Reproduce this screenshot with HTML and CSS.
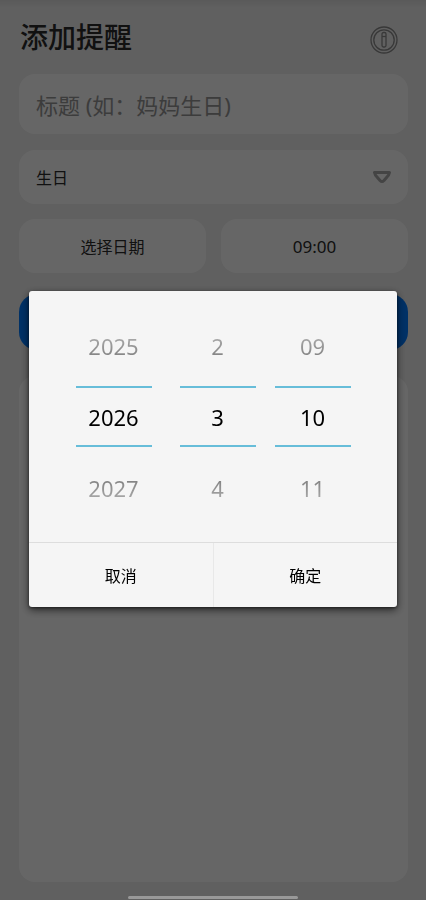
FILE: index.html
```html
<!DOCTYPE html>
<html lang="zh-CN">
<head>
<meta charset="utf-8">
<meta name="viewport" content="width=device-width, initial-scale=1">
<title>添加提醒</title>
<link rel="stylesheet" href="styles.css">
</head>
<body>
<main class="page">
  <header class="header">
    <h1 class="title">添加提醒</h1>
    <button class="info" type="button" aria-label="关于">
      <svg viewBox="0 0 28 28" width="28" height="28" fill="none" stroke="currentColor" stroke-width="1.3">
        <circle cx="14" cy="14" r="13"/>
        <circle cx="14" cy="14" r="10.2"/>
        <rect x="12" y="6.500" width="4" height="14.500" rx="1.500"/>
        <path d="M12 10.500H16"/>
      </svg>
    </button>
  </header>
  <form class="form">
    <input class="field name" type="text" aria-label="标题" placeholder="标题 (如：妈妈生日)">
    <div class="select-wrap">
      <select class="field kind" aria-label="类型"><option>生日</option></select>
      <svg class="arrow" viewBox="0 0 20 14" width="20" height="14" fill="none" stroke="currentColor" stroke-width="3" stroke-linejoin="round">
        <path d="M2.500 2.500H17.500Q17 5 15 7L12 10.500Q10 12.500 8 10.500L5 7Q3 5 2.500 2.500Z"/>
      </svg>
    </div>
    <div class="pair">
      <button class="field date" type="button">选择日期</button>
      <button class="field time" type="button">09:00</button>
    </div>
    <button class="submit" type="button" aria-label="保存"></button>
  </form>
  <section class="list" aria-label="提醒列表"></section>
</main>
<div class="scrim">
  <div class="dialog" role="dialog" aria-modal="true" aria-label="选择日期">
    <div class="picker">
      <div class="wheel year">
        <button class="step prev" type="button">2025</button>
        <input class="current" type="text" aria-label="年" value="2026">
        <button class="step next" type="button">2027</button>
      </div>
      <div class="wheel">
        <button class="step prev" type="button">2</button>
        <input class="current" type="text" aria-label="月" value="3">
        <button class="step next" type="button">4</button>
      </div>
      <div class="wheel">
        <button class="step prev" type="button">09</button>
        <input class="current" type="text" aria-label="日" value="10">
        <button class="step next" type="button">11</button>
      </div>
    </div>
    <div class="actions">
      <button class="action" type="button">取消</button>
      <button class="action" type="button">确定</button>
    </div>
  </div>
</div>
<div class="home-bar"></div>
</body>
</html>
```
FILE: styles.css
```css
* {
  box-sizing: border-box;
}

body {
  margin: 0;
  background: #f0f0f0;
  color: #2b2b2b;
  font-family: "Noto Sans", "Noto Sans CJK SC", sans-serif;
}

button,
input,
select {
  margin: 0;
  padding: 0;
  border: 0;
  background: none;
  color: inherit;
  font: inherit;
}

.page {
  display: flex;
  flex-direction: column;
  min-height: 100vh;
  padding: 16px 18px 18px 19px;
  background: linear-gradient(#e0e0e0, #f0f0f0 8px);
}

.header {
  display: flex;
  align-items: center;
  justify-content: space-between;
  height: 42px;
  padding: 0 10px 0 1px;
}

.title {
  margin: 0;
  font-size: 28px;
  line-height: 42px;
  font-weight: 500;
}

.info {
  height: 28px;
  margin-top: 6px;
  color: #8c8c8c;
}

.info svg {
  display: block;
}

.form {
  display: flex;
  flex-direction: column;
  margin-top: 16px;
}

.field {
  width: 100%;
  height: 54px;
  border-radius: 16px;
  background: #fff;
  font-size: 16px;
}

.name {
  height: 60px;
  padding: 2px 17px 0;
  font-size: 22px;
}

.name::placeholder {
  color: #969696;
  opacity: 1;
}

.select-wrap {
  position: relative;
  margin-top: 16px;
}

.kind {
  display: block;
  padding: 2px 17px 0;
  appearance: none;
}

.arrow {
  position: absolute;
  top: 20px;
  right: 16px;
  color: #aaa;
  pointer-events: none;
}

.pair {
  display: flex;
  gap: 15px;
  margin-top: 15px;
}

.time {
  font-size: 17px;
}

.submit {
  height: 56px;
  margin-top: 21px;
  border-radius: 18px;
  background: #007aff;
}

.list {
  flex: 1;
  margin-top: 26px;
  border-radius: 16px;
  background: #fff;
}

.scrim {
  position: fixed;
  inset: 0;
  display: flex;
  align-items: center;
  justify-content: center;
  padding: 0 29px 2px;
  background: rgba(0, 0, 0, 0.6);
}

.dialog {
  width: 100%;
  border-radius: 3px;
  background: #f5f5f5;
  color: #000;
  box-shadow: 0 3px 8px rgba(0, 0, 0, 0.6), 0 1px 3px rgba(0, 0, 0, 0.5);
}

.picker {
  display: flex;
  justify-content: center;
  gap: 19px;
  padding: 21px 0 17px;
}

.wheel {
  display: flex;
  flex-direction: column;
  width: 76px;
}

.year {
  margin-right: 9px;
}

.step {
  height: 71px;
  padding-bottom: 4px;
  color: transparent;
  font-size: 22px;
}

.prev {
  background-image: linear-gradient(#aaa 35%, #808080 65%);
  background-clip: text;
}

.next {
  background-image: linear-gradient(#808080 35%, #aaa 65%);
  background-clip: text;
}

.current {
  width: 100%;
  height: 61px;
  margin: 3px 0 7px;
  border-top: 2px solid #67bdd9;
  border-bottom: 2px solid #67bdd9;
  font-size: 22px;
  text-align: center;
}

.actions {
  display: flex;
  border-top: 1px solid #ddd;
}

.action {
  flex: 1;
  height: 64px;
  font-size: 16px;
}

.action + .action {
  border-left: 1px solid #e8e8e8;
}

.home-bar {
  position: fixed;
  bottom: 1px;
  left: 30%;
  width: 40%;
  height: 3px;
  border-radius: 2px;
  background: #999;
}
```
